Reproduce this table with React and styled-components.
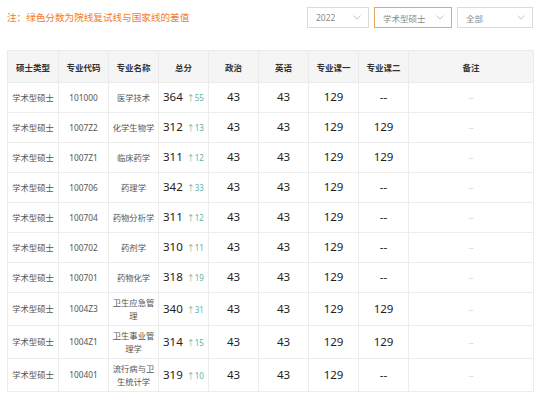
import styled, { createGlobalStyle } from "styled-components";

const GlobalStyle = createGlobalStyle`
  body {
    margin: 0;
    background: #fff;
    font-family: "Noto Sans", "Noto Sans CJK SC", sans-serif;
  }
`;

const rows = [
  { type: "学术型硕士", code: "101000", name: "医学技术", total: 364, diff: 55, zz: 43, yy: 43, k1: 129, k2: "--" },
  { type: "学术型硕士", code: "1007Z2", name: "化学生物学", total: 312, diff: 13, zz: 43, yy: 43, k1: 129, k2: "129" },
  { type: "学术型硕士", code: "1007Z1", name: "临床药学", total: 311, diff: 12, zz: 43, yy: 43, k1: 129, k2: "129" },
  { type: "学术型硕士", code: "100706", name: "药理学", total: 342, diff: 33, zz: 43, yy: 43, k1: 129, k2: "--" },
  { type: "学术型硕士", code: "100704", name: "药物分析学", total: 311, diff: 12, zz: 43, yy: 43, k1: 129, k2: "--" },
  { type: "学术型硕士", code: "100702", name: "药剂学", total: 310, diff: 11, zz: 43, yy: 43, k1: 129, k2: "--" },
  { type: "学术型硕士", code: "100701", name: "药物化学", total: 318, diff: 19, zz: 43, yy: 43, k1: 129, k2: "--" },
  { type: "学术型硕士", code: "1004Z3", name: "卫生应急管理", total: 340, diff: 31, zz: 43, yy: 43, k1: 129, k2: "129" },
  { type: "学术型硕士", code: "1004Z1", name: "卫生事业管理学", total: 314, diff: 15, zz: 43, yy: 43, k1: 129, k2: "129" },
  { type: "学术型硕士", code: "100401", name: "流行病与卫生统计学", total: 319, diff: 10, zz: 43, yy: 43, k1: 129, k2: "--" },
];

const headers = ["硕士类型", "专业代码", "专业名称", "总分", "政治", "英语", "专业课一", "专业课二", "备注"];

const Chevron = () => (
  <svg width="8" height="5" viewBox="0 0 8 5">
    <polyline points="0.5,0.5 4,4.2 7.5,0.5" fill="none" stroke="#c0c0c0" strokeWidth="0.9" />
  </svg>
);

const App = () => {
  return (
    <Page>
      <GlobalStyle />
      <TopBar>
        <Note>注：绿色分数为院线复试线与国家线的差值</Note>
        <Filters>
          <Select $w={62}>
            <span>2022</span>
            <Chevron />
          </Select>
          <Select $w={78} $active>
            <span>学术型硕士</span>
            <Chevron />
          </Select>
          <Select $w={76}>
            <span>全部</span>
            <Chevron />
          </Select>
        </Filters>
      </TopBar>
      <Table>
        <colgroup>
          <col style={{ width: 51 }} />
          {[0, 1, 2, 3, 4, 5, 6].map((i) => (
            <col key={i} style={{ width: 50 }} />
          ))}
          <col style={{ width: 125 }} />
        </colgroup>
        <thead>
          <tr>
            {headers.map((h) => (
              <Th key={h}>{h}</Th>
            ))}
          </tr>
        </thead>
        <tbody>
          {rows.map((r) => (
            <tr key={r.code}>
              <Td>{r.type}</Td>
              <Td>{r.code}</Td>
              <NameTd>{r.name}</NameTd>
              <Td>
                <Score>{r.total}</Score>
                <Diff>↑{r.diff}</Diff>
              </Td>
              <Td><Score>{r.zz}</Score></Td>
              <Td><Score>{r.yy}</Score></Td>
              <Td><Score>{r.k1}</Score></Td>
              <Td><Score>{r.k2}</Score></Td>
              <Td><Remark>--</Remark></Td>
            </tr>
          ))}
        </tbody>
      </Table>
    </Page>
  );
};

const Page = styled.div`
  width: 538px;
  height: 396px;
  overflow: hidden;
  padding: 7px 5px 0 7px;
  box-sizing: border-box;
`;

const TopBar = styled.div`
  display: flex;
  justify-content: space-between;
  align-items: center;
  height: 21px;
  margin-bottom: 22px;
`;

const Note = styled.div`
  font-size: 9.6px;
  color: #f37a2c;
  margin-top: -2px;
`;

const Filters = styled.div`
  display: flex;
  gap: 5px;
`;

const Select = styled.div`
  width: ${({ $w }) => $w}px;
  height: 21px;
  box-sizing: border-box;
  border: 1px solid ${({ $active }) => ($active ? "#e9a562" : "#dcdcdc")};
  display: flex;
  align-items: center;
  justify-content: space-between;
  padding: 0 7px 0 8px;
  font-size: 8.5px;
  color: #8a8a8a;
  background: #fff;
`;

const Table = styled.table`
  border-collapse: collapse;
  table-layout: fixed;
  width: 526px;
  border-top: 1px solid #f0f0f0;
`;

const Th = styled.th`
  height: 31px;
  background: #f5f5f5;
  border: 1px solid #ebebeb;
  font-size: 8.5px;
  font-weight: bold;
  color: #333;
  text-align: center;
  padding: 0;
`;

const Td = styled.td`
  height: 30px;
  border: 1px solid #ececec;
  text-align: center;
  padding: 2.5px 2px;
  font-size: 8.3px;
  line-height: 13.5px;
  color: #555;
  box-sizing: border-box;
  white-space: nowrap;
`;

const NameTd = styled(Td)`
  white-space: normal;
  padding: 2.5px 1px;
`;

const Score = styled.span`
  font-size: 11.5px;
  color: #222;
`;

const Diff = styled.span`
  font-size: 8px;
  color: #5bb59b;
  margin-left: 4px;
`;

const Remark = styled.span`
  font-size: 7px;
  color: #bcbcbc;
`;

export default App;
